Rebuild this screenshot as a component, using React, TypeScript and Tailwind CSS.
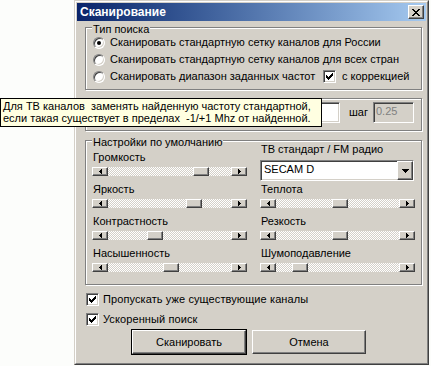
import React from 'react';

// classic win2000 raised / sunken edges
const raised =
  'border border-t-white border-l-white border-r-[#404040] border-b-[#404040] shadow-[inset_-1px_-1px_0_#808080]';
const sunken =
  'border border-t-[#808080] border-l-[#808080] border-r-white border-b-white shadow-[inset_1px_1px_0_#404040,inset_-1px_-1px_0_#d4d0c8]';

const checkSpans: [number, number, number][] = [
  [6, 0, 1], [5, 1, 2], [0, 2, 1], [4, 2, 3], [0, 3, 2], [3, 3, 3], [0, 4, 5], [1, 5, 3], [2, 6, 1],
];

const xSpans: [number, number, number][] = [
  [0, 0, 2], [6, 0, 2], [1, 1, 2], [5, 1, 2], [2, 2, 4], [3, 3, 2], [2, 4, 4], [1, 5, 2], [5, 5, 2], [0, 6, 2], [6, 6, 2],
];

const spansToPath = (spans: [number, number, number][]) =>
  spans.map(([x, y, w]) => `M${x} ${y}h${w}v1h-${w}z`).join('');

const CheckBox = ({ checked }: { checked: boolean }) => (
  <div className={`shrink-0 w-[13px] h-[13px] bg-white flex items-center justify-center ${sunken}`}>
    {checked && (
      <svg width="7" height="7" viewBox="0 0 7 7" shapeRendering="crispEdges">
        <path d={spansToPath(checkSpans)} fill="#000" />
      </svg>
    )}
  </div>
);

const Radio = ({ checked }: { checked: boolean }) => (
  <div className={`shrink-0 w-[12px] h-[12px] rounded-full bg-white flex items-center justify-center ${sunken}`}>
    {checked && <div className="w-[4px] h-[4px] rounded-full bg-black" />}
  </div>
);

const ArrowBtn = ({ dir }: { dir: 'left' | 'right' }) => (
  <div className={`w-[16px] h-full bg-[#d4d0c8] flex items-center justify-center ${raised}`}>
    <svg width="3" height="5" viewBox="0 0 3 5" shapeRendering="crispEdges">
      <polygon points={dir === 'left' ? '3,0 0,2.5 3,5' : '0,0 3,2.5 0,5'} fill="#000" />
    </svg>
  </div>
);

const Slider = ({ value }: { value: number }) => (
  <div className="flex h-[9px] w-[155px] bg-[image:repeating-conic-gradient(#ffffff_0%_25%,#d4d0c8_0%_50%)] bg-[length:2px_2px]">
    <ArrowBtn dir="left" />
    <div className="relative flex-1">
      {/* value = pixel offset of the thumb from the slider's left edge */}
      <div className={`absolute top-0 h-full w-[16px] bg-[#d4d0c8] ${raised}`} style={{ left: value - 16 }} />
    </div>
    <ArrowBtn dir="right" />
  </div>
);

const GroupBox = ({ title, className, children }: { title?: string; className: string; children?: React.ReactNode }) => (
  <div
    className={`relative ml-[8px] w-[337px] border border-[#808080] shadow-[1px_1px_0_#fff,inset_1px_1px_0_#fff] ${className}`}
  >
    {title && (
      <span className="absolute -top-[5px] left-[6px] px-[1px] bg-[#d4d0c8] leading-[13px]">{title}</span>
    )}
    {children}
  </div>
);

const SliderRow = ({ label, value }: { label: string; value: number }) => (
  <div>
    <div className="h-[13px] leading-[13px] pl-[1px]">{label}</div>
    <div className="mt-[3px]">
      <Slider value={value} />
    </div>
  </div>
);

export default function App() {
  return (
    <div className="relative min-h-[366px] bg-[#fcfdfb] font-['Liberation_Sans',sans-serif] text-[11px] text-black whitespace-nowrap">
      <div className="ml-[74px] w-[355px] h-[365px] border border-t-[#d4d0c8] border-l-[#d4d0c8] border-r-[#404040] border-b-[#404040]">
        <div className="h-full border border-t-white border-l-white border-r-[#808080] border-b-[#808080] bg-[#d4d0c8] p-[1px]">
          {/* title bar */}
          <div className="h-[18px] flex items-center justify-between bg-linear-to-r from-[#0a246a] to-[#a6caf0] pl-[3px] pr-[2px]">
            <span className="text-white text-[12px] font-bold leading-[18px]">Сканирование</span>
            <div className={`w-[16px] h-[14px] bg-[#d4d0c8] flex items-center justify-center ${raised}`}>
              <svg width="8" height="7" viewBox="0 0 8 7" shapeRendering="crispEdges">
                <path d={spansToPath(xSpans)} fill="#000" />
              </svg>
            </div>
          </div>

          <GroupBox title="Тип поиска" className="mt-[6px] h-[63px] pt-[6px] pl-[7px]">
            <div className="flex items-center h-[17px] gap-[5px]">
              <Radio checked />
              <span>Сканировать стандартную сетку каналов для России</span>
            </div>
            <div className="flex items-center h-[17px] gap-[5px]">
              <Radio checked={false} />
              <span>Сканировать стандартную сетку каналов для всех стран</span>
            </div>
            <div className="flex items-center h-[17px] gap-[5px]">
              <Radio checked={false} />
              <span className="w-[208px]">Сканировать диапазон заданных частот</span>
              <CheckBox checked />
              <span className="ml-[1px]">с коррекцией</span>
            </div>
          </GroupBox>

          {/* range inputs, mostly hidden under the tooltip */}
          <GroupBox className="mt-[8px] h-[33px] pt-[3px] pr-[7px] flex justify-end items-start">
            <div className={`w-[52px] h-[21px] bg-white ${sunken}`} />
            <span className="leading-[21px] ml-[9px] mr-[5px]">шаг</span>
            <div className={`w-[41px] h-[21px] bg-[#d4d0c8] pl-[2px] leading-[17px] text-[#808080] ${sunken}`}>0.25</div>
          </GroupBox>

          <GroupBox title="Настройки по умолчанию" className="mt-[9px] h-[145px] flex">
            <div className="pl-[6px] pt-[10px] flex flex-col gap-[7px]">
              <SliderRow label="Громкость" value={101} />
              <SliderRow label="Яркость" value={94} />
              <SliderRow label="Контрастность" value={55} />
              <SliderRow label="Насышенность" value={71} />
            </div>
            <div className="ml-[13px] pt-[2px] flex flex-col">
              <div className="h-[13px] leading-[13px] pl-[1px]">ТВ стандарт / FM радио</div>
              <div className={`mt-[4px] w-[154px] h-[21px] bg-white flex items-stretch ${sunken}`}>
                <span className="flex-1 pl-[3px] leading-[17px]">SECAM D</span>
                <div className={`w-[16px] bg-[#d4d0c8] flex items-center justify-center ${raised}`}>
                  <svg width="7" height="4" viewBox="0 0 7 4" shapeRendering="crispEdges">
                    <polygon points="0,0 7,0 3.5,4" fill="#000" />
                  </svg>
                </div>
              </div>
              <div className="mt-[2px] flex flex-col gap-[7px]">
                <SliderRow label="Теплота" value={72} />
                <SliderRow label="Резкость" value={72} />
                <SliderRow label="Шумоподавление" value={32} />
              </div>
            </div>
          </GroupBox>

          <div className="ml-[9px] mt-[8px] flex items-center gap-[4px] h-[13px]">
            <CheckBox checked />
            <span className="tracking-[0.1px]">Пропускать уже существующие каналы</span>
          </div>
          <div className="ml-[9px] mt-[7px] flex items-center gap-[4px] h-[13px]">
            <CheckBox checked />
            <span className="tracking-[0.1px]">Ускоренный поиск</span>
          </div>

          <div className="mt-[3px] ml-[54px] flex items-start gap-[5px]">
            <div className="w-[116px] h-[26px] border border-black">
              <div className={`h-full bg-[#d4d0c8] flex items-center justify-center ${raised}`}>Сканировать</div>
            </div>
            <div className={`mt-[1px] w-[114px] h-[24px] bg-[#d4d0c8] flex items-center justify-center ${raised}`}>
              Отмена
            </div>
          </div>
        </div>
      </div>

      {/* tooltip over the frequency range box */}
      <div className="absolute left-0 top-[98px] w-[322px] h-[29px] border border-black bg-[#ffffe1] pl-[2px] pt-[1px] text-[11px] leading-[12px] whitespace-pre">
        <div>Для ТВ каналов  заменять найденную частоту стандартной,</div>
        <div>если такая существует в пределах  -1/+1 Mhz от найденной.</div>
      </div>
    </div>
  );
}
